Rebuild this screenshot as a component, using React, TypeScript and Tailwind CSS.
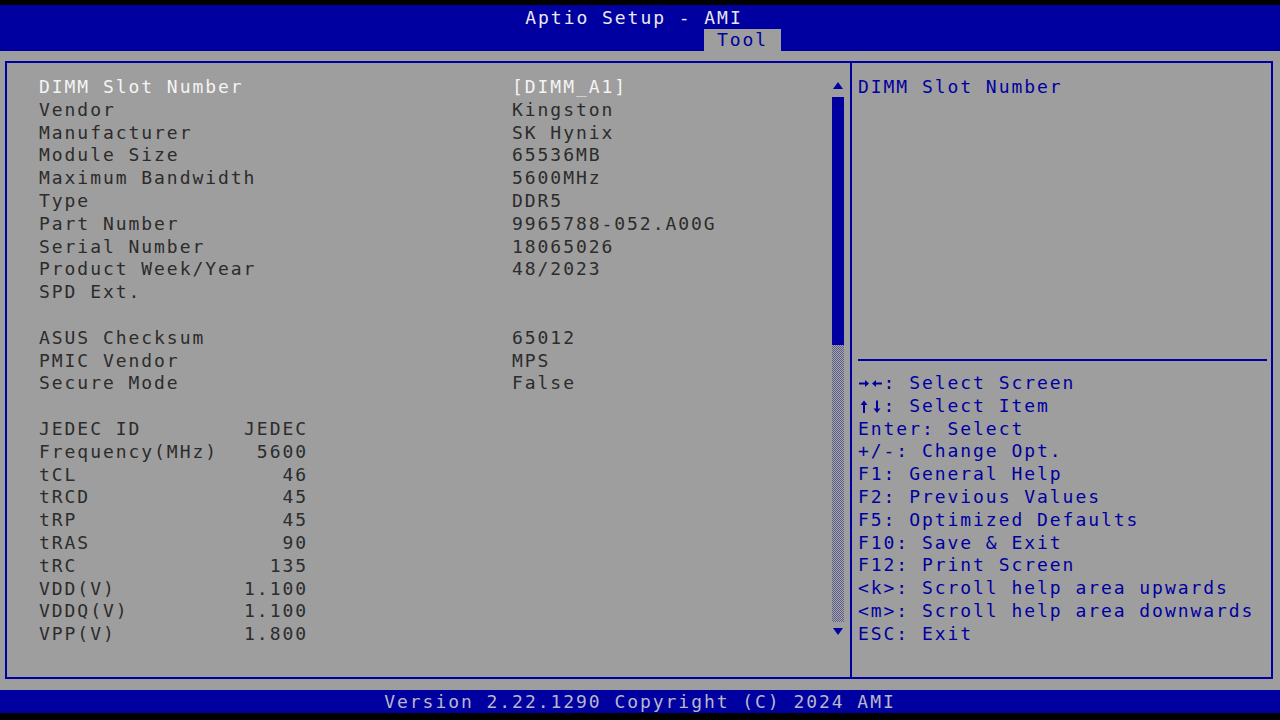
import React from "react";

const BLUE = "#0000a0";

const infoRows: [string, string][] = [
  ["Vendor", "Kingston"],
  ["Manufacturer", "SK Hynix"],
  ["Module Size", "65536MB"],
  ["Maximum Bandwidth", "5600MHz"],
  ["Type", "DDR5"],
  ["Part Number", "9965788-052.A00G"],
  ["Serial Number", "18065026"],
  ["Product Week/Year", "48/2023"],
  ["SPD Ext.", ""],
];

const asusRows: [string, string][] = [
  ["ASUS Checksum", "65012"],
  ["PMIC Vendor", "MPS"],
  ["Secure Mode", "False"],
];

const jedecRows: [string, string][] = [
  ["JEDEC ID", "JEDEC"],
  ["Frequency(MHz)", "5600"],
  ["tCL", "46"],
  ["tRCD", "45"],
  ["tRP", "45"],
  ["tRAS", "90"],
  ["tRC", "135"],
  ["VDD(V)", "1.100"],
  ["VDDQ(V)", "1.100"],
  ["VPP(V)", "1.800"],
];

const helpLines = [
  "Enter: Select",
  "+/-: Change Opt.",
  "F1: General Help",
  "F2: Previous Values",
  "F5: Optimized Defaults",
  "F10: Save & Exit",
  "F12: Print Screen",
  "<k>: Scroll help area upwards",
  "<m>: Scroll help area downwards",
  "ESC: Exit",
];

function Arrow({ dir }: { dir: "r" | "l" | "u" | "d" }) {
  const paths: Record<string, string> = {
    r: "M1,5.5 H7 V3 L11,6.5 L7,10 V7.5 H1 Z",
    l: "M11,5.5 H5 V3 L1,6.5 L5,10 V7.5 H11 Z",
    u: "M5,13 V5 H2.5 L6,0.5 L9.5,5 H7 V13 Z",
    d: "M5,0.5 V8.5 H2.5 L6,13 L9.5,8.5 H7 V0.5 Z",
  };
  return (
    <span className="inline-block w-[12.8px] h-[22.8px] align-top relative">
      <svg className="absolute left-[0px] top-[5px]" width="12" height="14" viewBox="0 0 12 14">
        <path d={paths[dir]} fill={BLUE} />
      </svg>
    </span>
  );
}

function Row({ label, value, light }: { label: string; value: string; light?: boolean }) {
  return (
    <div className={`flex h-[22.8px] leading-[22.8px] whitespace-pre ${light ? "text-[#f4f4f4]" : "text-[#2c2c2c]"}`}>
      <div className="w-[473px]">{label}</div>
      <div>{value}</div>
    </div>
  );
}

function JRow({ label, value }: { label: string; value: string }) {
  return (
    <div className="flex h-[22.8px] leading-[22.8px] whitespace-pre text-[#2c2c2c]">
      <div className="w-[269px] flex justify-between">
        <span>{label}</span>
        <span>{value}</span>
      </div>
    </div>
  );
}

export default function App() {
  return (
    <div className="w-[1280px] h-[720px] bg-black flex flex-col overflow-hidden font-['DejaVu_Sans_Mono',monospace] text-[18px] tracking-[1.95px]">
      <div className="h-[5px] shrink-0" />
      <header className="h-[46px] shrink-0 bg-[#0000a0] flex flex-col">
        <div className="h-[24px] leading-[26px] text-center text-[#e8e8f0] pr-[12px]">Aptio Setup - AMI</div>
        <div className="flex-1 flex pl-[704px]">
          <div className="w-[77px] h-[22px] bg-[#9e9e9e] text-[#0000a0] text-center leading-[22px]">Tool</div>
        </div>
      </header>
      <main className="h-[639px] shrink-0 bg-[#9e9e9e] pt-[10px] pl-[5px] pr-[7px]">
        <div className="h-[618px] border-2 border-[#0000a0] flex">
          {/* left panel */}
          <div className="w-[845px] border-r-2 border-[#0000a0] flex">
            <div className="w-[825px] pl-[32px] pt-[13px]">
              <Row label="DIMM Slot Number" value="[DIMM_A1]" light />
              {infoRows.map(([l, v]) => (
                <Row key={l} label={l} value={v} />
              ))}
              <div className="h-[22.8px]" />
              {asusRows.map(([l, v]) => (
                <Row key={l} label={l} value={v} />
              ))}
              <div className="h-[22.8px]" />
              {jedecRows.map(([l, v]) => (
                <JRow key={l} label={l} value={v} />
              ))}
            </div>
            <div className="w-[12px] flex flex-col pt-[19px]">
              <svg width="12" height="7" viewBox="0 0 12 7">
                <polygon points="6,0 11,7 1,7" fill={BLUE} />
              </svg>
              <div className="mt-[8px] h-[248px] bg-[#0000a0]" />
              <div className="h-[277px] bg-[repeating-conic-gradient(#5a5a8a_0_25%,#a8a8a8_0_50%)] bg-[length:2px_2px]" />
              <svg className="mt-[6px]" width="12" height="7" viewBox="0 0 12 7">
                <polygon points="1,0 11,0 6,7" fill={BLUE} />
              </svg>
            </div>
          </div>
          {/* right panel */}
          <div className="flex-1 flex flex-col pl-[6px] pr-[4px] text-[#0000a0]">
            <div className="h-[296px] pt-[13px]">
              <div className="h-[22.8px] leading-[22.8px] whitespace-pre">DIMM Slot Number</div>
            </div>
            <div className="h-[2px] bg-[#0000a0]" />
            <div className="pt-[11px]">
              <div className="h-[22.8px] leading-[22.8px] whitespace-pre">
                <Arrow dir="r" />
                <Arrow dir="l" />
                : Select Screen
              </div>
              <div className="h-[22.8px] leading-[22.8px] whitespace-pre">
                <Arrow dir="u" />
                <Arrow dir="d" />
                : Select Item
              </div>
              {helpLines.map((l) => (
                <div key={l} className="h-[22.8px] leading-[22.8px] whitespace-pre">
                  {l}
                </div>
              ))}
            </div>
          </div>
        </div>
      </main>
      <footer className="h-[23px] shrink-0 bg-[#0000a0] text-center leading-[23px] text-[#b8b8c8]">
        Version 2.22.1290 Copyright (C) 2024 AMI
      </footer>
    </div>
  );
}
